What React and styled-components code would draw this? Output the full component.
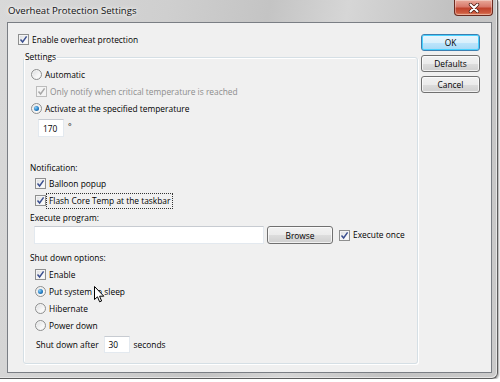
import React from 'react';
import styled, { createGlobalStyle } from 'styled-components';

const GlobalStyle = createGlobalStyle`
  html, body {
    margin: 0;
    padding: 0;
    background: #ffffff;
  }
  body {
    font-family: "Open Sans", "Noto Sans", sans-serif;
    font-size: 8.4px;
    color: #000;
  }
`;

const Window = styled.div`
  position: relative;
  box-sizing: border-box;
  width: 498px;
  height: 379px;
  display: flex;
  flex-direction: column;
  padding: 0 5px 5px 7px;
  border-right: 1px solid #5c5c5c;
  border-bottom: 1px solid #5c5c5c;
  border-bottom-right-radius: 6px;
  background: linear-gradient(100deg, #d9d9d9 0%, #cfcfcf 30%, #c4c4c4 48%, #d6d6d6 62%, #c2c2c2 80%, #cbcbcb 100%);
  box-shadow: 1px 1px 2px rgba(0, 0, 0, 0.35), inset -1px -1px 0 #e6e6e6;
`;

const TitleBar = styled.div`
  height: 22px;
  display: flex;
  align-items: flex-start;
  justify-content: space-between;
  margin-left: -7px;
  padding-left: 8px;
`;

const Title = styled.div`
  font-size: 9.6px;
  line-height: 22px;
  color: #111;
  text-shadow: 0 0 6px #fff, 0 0 3px #fff;
`;

const CloseButton = styled.div`
  box-sizing: border-box;
  width: 39px;
  height: 16px;
  margin-right: -1px;
  display: flex;
  align-items: center;
  justify-content: center;
  border: 1px solid #6b2a1f;
  border-top: none;
  border-radius: 0 0 4px 4px;
  background: linear-gradient(180deg, #e9a99a 0%, #d8786a 45%, #c0422c 55%, #cd5a3e 85%, #e28c6c 100%);
  box-shadow: inset 0 0 0 1px rgba(255, 255, 255, 0.35);
`;

const Client = styled.div`
  flex: 1;
  display: flex;
  padding: 8px 9px 8px 10px;
  border: 1px solid #7a7e84;
  background: #f0f0f0;
  min-height: 0;
`;

const MainColumn = styled.div`
  display: flex;
  flex-direction: column;
  width: 400px;
`;

const ButtonColumn = styled.div`
  display: flex;
  flex-direction: column;
  gap: 4px;
  padding-top: 3px;
  margin-left: 3px;
`;

const GroupBox = styled.fieldset`
  box-sizing: border-box;
  margin: 3px 0 0 5px;
  padding: 0 0 8px 0;
  width: 395px;
  flex: 1;
  border: 1px solid #d5dfe5;
  border-radius: 3px;
  box-shadow: inset 1px 1px 0 #fff, 1px 1px 0 #fff;
`;

const GroupLegend = styled.legend`
  padding: 0 1px;
  margin-left: 0;
  line-height: 12px;
`;

const Row = styled.div`
  display: flex;
  align-items: center;
  height: ${p => p.$h || 17}px;
  margin-top: ${p => p.$mt || 0}px;
  padding-left: ${p => p.$indent || 0}px;
  color: ${p => (p.$disabled ? '#8d8d8d' : '#000')};
  white-space: nowrap;
`;

const Label = styled.span`
  line-height: 12px;
  margin-left: ${p => p.$ml ?? 2}px;
  padding: 0 1px;
  outline: ${p => (p.$focus ? '1px dotted #333' : 'none')};
  outline-offset: 1px;
`;

const Box = styled.span`
  box-sizing: border-box;
  width: 11px;
  height: 11px;
  flex: none;
  display: flex;
  align-items: center;
  justify-content: center;
  margin-left: ${p => p.$ml || 0}px;
  border: 1px solid ${p => (p.$disabled ? '#bcbcbc' : '#8e8f8f')};
  background: ${p => (p.$disabled ? '#f4f4f4' : 'linear-gradient(135deg, #d9dbdd 0%, #f6f6f6 60%, #ffffff 100%)')};
  box-shadow: inset 0 0 0 1px #f4f4f4;
  border-radius: ${p => (p.$round ? '50%' : '0')};
`;

const Dot = styled.span`
  width: 5px;
  height: 5px;
  border-radius: 50%;
  background: radial-gradient(circle at 35% 35%, #8fd0f8 0%, #2a84c9 50%, #114a86 100%);
`;

const TextInput = styled.div`
  box-sizing: border-box;
  width: ${p => p.$w}px;
  height: ${p => p.$hh || 18}px;
  flex: none;
  display: flex;
  align-items: center;
  padding-left: 4px;
  margin-left: ${p => p.$ml || 0}px;
  background: #fff;
  border: 1px solid #e3e9ef;
  border-top-color: #c7cbd1;
`;

const PushButton = styled.div`
  box-sizing: border-box;
  width: ${p => p.$w || 59}px;
  height: ${p => p.$hh || 17}px;
  flex: none;
  display: flex;
  align-items: center;
  justify-content: center;
  margin-left: ${p => p.$ml || 0}px;
  border: 1px solid ${p => (p.$default ? '#3c7fb1' : '#707070')};
  border-radius: 3px;
  background: ${p =>
    p.$default
      ? 'linear-gradient(180deg, #eaf6fd 0%, #d9f0fc 50%, #bee6fd 51%, #a7d9f5 100%)'
      : 'linear-gradient(180deg, #f2f2f2 0%, #ebebeb 50%, #dddddd 51%, #cfcfcf 100%)'};
  box-shadow: inset 0 0 0 1px ${p => (p.$default ? '#48d2ff' : 'rgba(255,255,255,0.7)')};
`;

const Degree = styled.span`
  margin-left: 4px;
  align-self: flex-start;
  margin-top: 2px;
`;

const Cursor = styled.svg`
  position: absolute;
  left: 94px;
  top: 286px;
`;

const Tick = ({ disabled }) => (
  <svg width="9" height="9" viewBox="0 0 9 9">
    <path d="M1.5 4.6 L3.6 7 L7.6 1.4" fill="none" stroke={disabled ? '#a8a8a8' : '#3b4f8f'} strokeWidth="1.5" />
  </svg>
);

const CheckBox = ({ checked, disabled, children, indent, focus, mt }) => (
  <Row $indent={indent} $disabled={disabled} $mt={mt}>
    <Box $disabled={disabled}>{checked && <Tick disabled={disabled} />}</Box>
    <Label $focus={focus}>{children}</Label>
  </Row>
);

const Radio = ({ checked, children, indent }) => (
  <Row $indent={indent}>
    <Box $round>{checked && <Dot />}</Box>
    <Label>{children}</Label>
  </Row>
);

const App = () => (
  <>
    <GlobalStyle />
    <Window>
      <TitleBar>
        <Title>Overheat Protection Settings</Title>
        <CloseButton>
          <svg width="12" height="10" viewBox="0 0 12 10">
            <path d="M2.5 1.5 L9.5 8.5 M9.5 1.5 L2.5 8.5" stroke="#4a1a12" strokeWidth="3.4" strokeLinecap="round" />
            <path d="M2.5 1.5 L9.5 8.5 M9.5 1.5 L2.5 8.5" stroke="#ffffff" strokeWidth="2" strokeLinecap="round" />
          </svg>
        </CloseButton>
      </TitleBar>
      <Client>
        <MainColumn>
          <CheckBox checked>Enable overheat protection</CheckBox>
          <GroupBox>
            <GroupLegend>Settings</GroupLegend>
            <Row $h={3} />
            <Radio indent={7}>Automatic</Radio>
            <CheckBox indent={12} checked disabled>Only notify when critical temperature is reached</CheckBox>
            <Radio indent={7} checked>Activate at the specified temperature</Radio>
            <Row $indent={14} $h={18} $mt={2}>
              <TextInput $w={26}>170</TextInput>
              <Degree>°</Degree>
            </Row>
            <Row $indent={6} $h={14} $mt={23}>Notification:</Row>
            <CheckBox indent={11} checked mt={1}>Balloon popup</CheckBox>
            <CheckBox indent={11} checked focus>Flash Core Temp at the taskbar</CheckBox>
            <Row $indent={6} $h={14} $mt={1}>Execute program:</Row>
            <Row $indent={10} $h={18} $mt={2}>
              <TextInput $w={230} />
              <PushButton $w={66} $hh={18} $ml={3}>Browse</PushButton>
              <Box $ml={6}>
                <Tick />
              </Box>
              <Label>Execute once</Label>
            </Row>
            <Row $indent={6} $h={14} $mt={6}>Shut down options:</Row>
            <CheckBox indent={11} checked mt={2}>Enable</CheckBox>
            <Radio indent={11} checked>Put system to sleep</Radio>
            <Radio indent={11}>Hibernate</Radio>
            <Radio indent={11}>Power down</Radio>
            <Row $indent={11} $h={17} $mt={2}>
              <Label $ml={0}>Shut down after</Label>
              <TextInput $w={26} $hh={17} $ml={4}>30</TextInput>
              <Label $ml={3}>seconds</Label>
            </Row>
          </GroupBox>
        </MainColumn>
        <ButtonColumn>
          <PushButton $default>OK</PushButton>
          <PushButton>Defaults</PushButton>
          <PushButton>Cancel</PushButton>
        </ButtonColumn>
      </Client>
      <Cursor width="11" height="17" viewBox="0 0 11 17">
        <path d="M0.5 0.5 L0.5 13.5 L3.5 10.8 L5.6 15.8 L7.6 15 L5.6 10.2 L9.8 10.2 Z" fill="#fff" stroke="#000" strokeWidth="1" strokeLinejoin="round" />
      </Cursor>
    </Window>
  </>
);

export default App;
